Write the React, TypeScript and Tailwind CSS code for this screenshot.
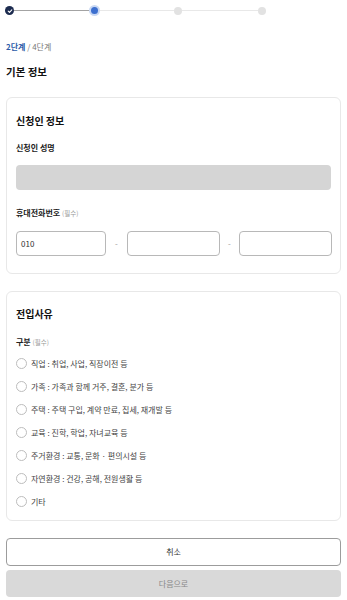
import React from "react";

const reasons = [
  "직업 : 취업, 사업, 직장이전 등",
  "가족 : 가족과 함께 거주, 결혼, 분가 등",
  "주택 : 주택 구입, 계약 만료, 집세, 재개발 등",
  "교육 : 진학, 학업, 자녀교육 등",
  "주거환경 : 교통, 문화 · 편의시설 등",
  "자연환경 : 건강, 공해, 전원생활 등",
  "기타",
];

function Stepper() {
  return (
    <div className="flex items-center h-[21px] -ml-[1px]">
      <div className="w-[9px] h-[9px] rounded-full bg-[#1c2b4f] flex items-center justify-center shrink-0">
        <svg width="6" height="6" viewBox="0 0 10 10" fill="none">
          <path d="M2 5.2 L4.2 7.3 L8 3" stroke="#ffffff" strokeWidth="1.8" strokeLinecap="round" strokeLinejoin="round" />
        </svg>
      </div>
      <div className="w-[75px] h-px bg-[#a3a3a3] shrink-0" />
      <div className="w-[11px] h-[11px] rounded-full bg-[#c9d8f3] flex items-center justify-center shrink-0">
        <div className="w-[7px] h-[7px] rounded-full bg-[#3c6fcf]" />
      </div>
      <div className="w-[74px] h-px bg-[#e8e8e8] shrink-0" />
      <div className="w-[8px] h-[8px] rounded-full bg-[#e2e2e2] shrink-0" />
      <div className="w-[76px] h-px bg-[#e8e8e8] shrink-0" />
      <div className="w-[8px] h-[8px] rounded-full bg-[#e2e2e2] shrink-0" />
    </div>
  );
}

export default function App() {
  return (
    <div
      className="w-[347px] h-[600px] bg-white px-[6px] overflow-hidden"
      style={{ fontFamily: '"Noto Sans CJK KR", "Noto Sans", sans-serif' }}
    >
      <Stepper />

      <div className="mt-[20px] text-[8px] leading-[11px]">
        <span className="font-bold text-[#2b5aa8]">2단계</span>
        <span className="text-[#777]"> / 4단계</span>
      </div>

      <div className="mt-[13px] text-[10.5px] leading-[14px] font-bold text-[#111]">기본 정보</div>

      <div className="mt-[18px] border border-[#e8e8e8] rounded-[6px] px-[9px] pt-[16px] pb-[17px]">
        <div className="text-[10px] leading-[14px] font-bold text-[#111]">신청인 정보</div>
        <div className="mt-[14px] text-[8px] leading-[11px] font-bold text-[#222]">신청인 성명</div>
        <div className="mt-[12px] h-[25px] rounded-[4px] bg-[#d5d5d5]" />
        <div className="mt-[17px] text-[8px] leading-[11px] font-bold text-[#222]">
          휴대전화번호 <span className="font-normal text-[#999] text-[6.5px]">(필수)</span>
        </div>
        <div className="mt-[12px] flex items-center">
          <div className="w-[90px] shrink-0 h-[25px] rounded-[4px] border border-[#b8b8b8] flex items-center px-[4px] text-[8px] text-[#333]">
            010
          </div>
          <div className="w-[21px] shrink-0 text-center text-[8px] text-[#999]">-</div>
          <div className="w-[93px] shrink-0 h-[25px] rounded-[4px] border border-[#b8b8b8]" />
          <div className="w-[19px] shrink-0 text-center text-[8px] text-[#999]">-</div>
          <div className="w-[93px] shrink-0 h-[25px] rounded-[4px] border border-[#b8b8b8]" />
        </div>
      </div>

      <div className="mt-[17px] border border-[#e8e8e8] rounded-[6px] px-[9px] pt-[15px] pb-[7px]">
        <div className="text-[10px] leading-[14px] font-bold text-[#111]">전입사유</div>
        <div className="mt-[15px] text-[8px] leading-[11px] font-bold text-[#222]">
          구분 <span className="font-normal text-[#999] text-[6.5px]">(필수)</span>
        </div>
        <div className="mt-[4px] flex flex-col">
          {reasons.map((r) => (
            <div key={r} className="h-[23px] flex items-center gap-[4px]">
              <div className="w-[11px] h-[11px] rounded-full border border-[#bdbdbd] bg-white shrink-0" />
              <span className="text-[8px] text-[#444]">{r}</span>
            </div>
          ))}
        </div>
      </div>

      <button className="mt-[17px] w-full h-[28px] rounded-[4px] border border-[#9c9c9c] bg-white text-[8px] text-[#333] flex items-center justify-center">
        취소
      </button>
      <button className="mt-[4px] w-full h-[27px] rounded-[4px] bg-[#d9d9d9] text-[8px] text-[#888] flex items-center justify-center">
        다음으로
      </button>
    </div>
  );
}
